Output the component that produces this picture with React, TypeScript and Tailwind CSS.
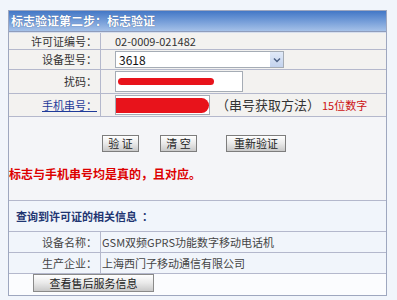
import React from 'react'

const font = { fontFamily: '"Noto Sans CJK SC", "Liberation Sans", sans-serif' }

const Btn: React.FC<{ label: string; className?: string }> = ({ label, className }) => (
  <button
    className={`h-[17px] border border-[#7d7d7d] bg-gradient-to-b from-white via-[#e9e9e9] to-[#c9c9c9] text-[11px] leading-none text-[#222] ${className ?? ''}`}
  >
    {label}
  </button>
)

export default function App() {
  return (
    <div className="min-h-[300px] w-[397px] bg-[#f1f5fb] pl-[8px] pt-[10px]" style={font}>
      <div className="w-[379px] border border-[#9ea7bf] bg-[#f6f7f9]">
        {/* Header */}
        <div className="flex h-[21px] items-center border-b border-[#8f9dbc] bg-gradient-to-b from-[#4277c6] to-[#a5c1e8] pl-[2px] text-[12px] font-bold text-white [text-shadow:0_0_1px_#2d4f8a]">
          标志验证第二步：标志验证
        </div>

        {/* Form rows */}
        <div className="flex h-[18px] border-t border-[#d7dfee] border-b border-b-[#b4b8cc] bg-[#f3f2f0]">
          <div className="flex w-[92px] shrink-0 items-center justify-end border-r border-[#b4b8cc] pr-[3px] text-[11px] text-[#333]">许可证编号：</div>
          <div className="flex items-center pl-[14px] text-[11px] text-[#333]">02-0009-021482</div>
        </div>
        <div className="flex h-[20px] border-b border-[#b4b8cc] bg-[#f3f2f0]">
          <div className="flex w-[92px] shrink-0 items-center justify-end border-r border-[#b4b8cc] pr-[3px] text-[11px] text-[#333]">设备型号：</div>
          <div className="flex items-center pl-[14px]">
            <div className="flex h-[17px] w-[169px] items-center justify-between border border-[#a5acb5] bg-white pl-[3px] text-[12px] text-[#111]">
              3618
              <span className="flex h-[15px] w-[13px] items-center justify-center bg-gradient-to-b from-[#e1eaf8] to-[#c3d3ee]">
                <svg width="8" height="6" viewBox="0 0 8 6">
                  <path d="M1 1.5 L4 4.5 L7 1.5" fill="none" stroke="#4d6185" strokeWidth="1.5" />
                </svg>
              </span>
            </div>
          </div>
        </div>
        <div className="flex h-[24px] border-b border-[#b4b8cc] bg-[#f3f2f0]">
          <div className="flex w-[92px] shrink-0 items-center justify-end border-r border-[#b4b8cc] pr-[3px] text-[11px] text-[#333]">扰码：</div>
          <div className="flex items-center pl-[14px]">
            <div className="flex h-[21px] w-[128px] items-center border border-[#a5acb5] bg-white pl-[2px]">
              <span className="h-[7px] w-[96px] rounded-full bg-[#e8131b]" />
            </div>
          </div>
        </div>
        <div className="flex h-[23px] border-b border-[#b4b8cc] bg-[#f3f2f0]">
          <div className="flex w-[92px] shrink-0 items-center justify-end border-r border-[#b4b8cc] pr-[3px] text-[11px] text-[#1f3a99] underline">手机串号：</div>
          <div className="flex items-center pl-[14px]">
            <div className="flex h-[20px] w-[95px] items-center border border-[#a5acb5] bg-white">
              <span className="h-[15px] w-[94px] rounded-r-full rounded-l-[4px] bg-[#e8131b]" />
            </div>
            <span className="ml-[6px] text-[13px] text-[#333]">（串号获取方法）</span>
            <span className="ml-[2px] text-[11px] text-[#cc1111]">15位数字</span>
          </div>
        </div>

        {/* Actions */}
        <div className="h-[84px] border-b border-[#b4b8cc] bg-[#f4f5f8]">
          <div className="flex pl-[93px] pt-[18px]">
            <Btn label="验 证" className="w-[37px]" />
            <Btn label="清 空" className="ml-[21px] w-[37px]" />
            <Btn label="重新验证" className="ml-[29px] w-[60px]" />
          </div>
          <div className="mt-[13px] text-[12px] font-bold text-[#dd0000]">标志与手机串号均是真的，且对应。</div>
        </div>

        {/* Query info */}
        <div className="flex h-[31px] items-center border-b border-[#b4b8cc] bg-[#f1f5fb] pl-[7px] text-[11px] font-bold text-[#1f3572]">
          查询到许可证的相关信息 &nbsp;：
        </div>
        <div className="flex h-[21px] border-b border-[#b4b8cc] bg-[#f1f5fb]">
          <div className="flex w-[92px] shrink-0 items-center justify-end border-r border-[#b4b8cc] pr-[3px] text-[11px] text-[#444]">设备名称：</div>
          <div className="flex items-center pl-[1px] text-[11px] text-[#444]">GSM双频GPRS功能数字移动电话机</div>
        </div>
        <div className="flex h-[21px] border-b border-[#b4b8cc] bg-[#f1f5fb]">
          <div className="flex w-[92px] shrink-0 items-center justify-end border-r border-[#b4b8cc] pr-[3px] text-[11px] text-[#444]">生产企业：</div>
          <div className="flex items-center pl-[1px] text-[11px] text-[#444]">上海西门子移动通信有限公司</div>
        </div>
        <div className="flex h-[21px] items-start bg-[#fbfcfe] pl-[24px]">
          <Btn label="查看售后服务信息" className="h-[18px] w-[121px] border-[#8a8a8a] text-[11px]" />
        </div>
      </div>
    </div>
  )
}
